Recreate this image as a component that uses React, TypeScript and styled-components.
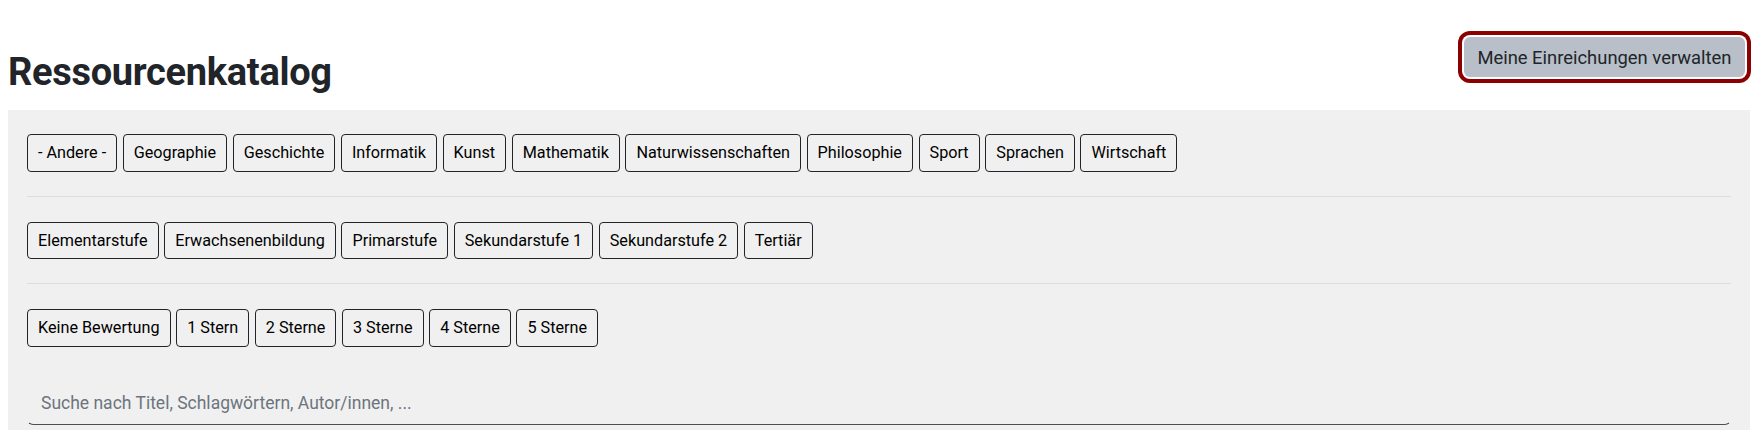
import React from 'react'
import styled, { createGlobalStyle } from 'styled-components'

const GlobalStyle = createGlobalStyle`
	body {
		margin: 8px;
		background: #fff;
		font-family: Roboto, 'Liberation Sans', sans-serif;
		color: #212529;
	}
`

const Header = styled.div`
	display: flex;
	justify-content: space-between;
	align-items: flex-start;
`

const Title = styled.h1`
	margin: 40px 0 14px;
	font-size: 38px;
	font-weight: 700;
	line-height: 48px;
	letter-spacing: -0.3px;
	color: #212529;
`

const ManageButton = styled.button`
	margin: 29px 7px 0 0;
	padding: 6.5px 13.5px;
	border: none;
	border-radius: 6px;
	background: #b8bfc8;
	color: #212529;
	font-family: inherit;
	font-size: 18.4px;
	line-height: 27px;
	box-shadow: 0 0 0 2px #fff, 0 0 0 6px #8b0000;
	cursor: pointer;
`

const Panel = styled.div`
	margin-right: 2px;
	padding: 0 19px 24px;
	background: #f0f0f0;
`

const FilterRow = styled.div<{ $last?: boolean }>`
	display: flex;
	flex-wrap: wrap;
	gap: 5.6px;
	padding: 25px 0 24px;
	border-bottom: ${({ $last }) => ($last ? 'none' : '1px solid #dcdcdc')};

	&:first-child {
		padding-top: 24px;
	}
`

const FilterButton = styled.button`
	padding: 6px 10px;
	border: 1px solid #212529;
	border-radius: 4px;
	background: transparent;
	color: #000;
	font-family: inherit;
	font-size: 16.2px;
	line-height: 23.5px;
	cursor: pointer;
`

const SearchInput = styled.input`
	display: block;
	box-sizing: border-box;
	width: 100%;
	height: 44px;
	margin-top: 10px;
	padding: 0 13px;
	border: 1px solid transparent;
	border-bottom-color: #4a5058;
	border-radius: 6px;
	background: transparent;
	font-family: inherit;
	font-size: 17.5px;
	color: #212529;
	outline: none;

	&::placeholder {
		color: #6c757d;
	}
`

const subjects = [
	'- Andere -',
	'Geographie',
	'Geschichte',
	'Informatik',
	'Kunst',
	'Mathematik',
	'Naturwissenschaften',
	'Philosophie',
	'Sport',
	'Sprachen',
	'Wirtschaft',
]

const levels = ['Elementarstufe', 'Erwachsenenbildung', 'Primarstufe', 'Sekundarstufe 1', 'Sekundarstufe 2', 'Tertiär']

const ratings = ['Keine Bewertung', '1 Stern', '2 Sterne', '3 Sterne', '4 Sterne', '5 Sterne']

const App = () => {
	const groups = [subjects, levels, ratings]

	return (
		<>
			<GlobalStyle />
			<Header>
				<Title>Ressourcenkatalog</Title>
				<ManageButton>Meine Einreichungen verwalten</ManageButton>
			</Header>
			<Panel>
				{groups.map((group, groupKey) => {
					return (
						<FilterRow key={groupKey} $last={groupKey === groups.length - 1}>
							{group.map((label) => {
								return <FilterButton key={label}>{label}</FilterButton>
							})}
						</FilterRow>
					)
				})}
				<SearchInput placeholder="Suche nach Titel, Schlagwörtern, Autor/innen, ..." />
			</Panel>
		</>
	)
}

export default App
